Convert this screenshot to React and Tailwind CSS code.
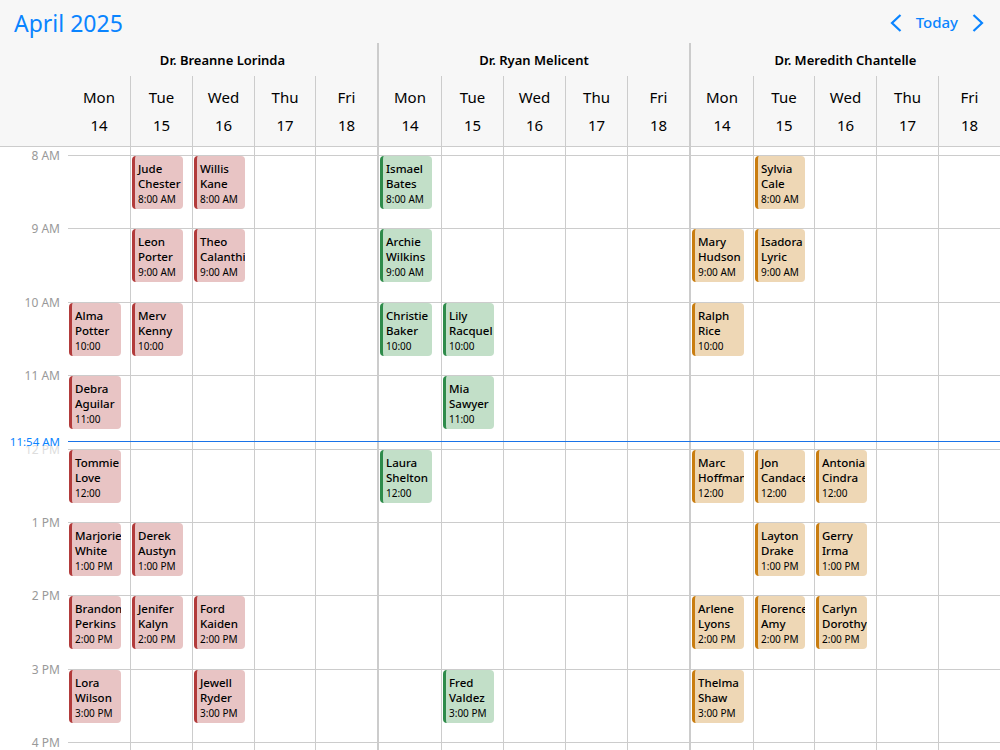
import React from 'react'

const days = [['Mon', 14], ['Tue', 15], ['Wed', 16], ['Thu', 17], ['Fri', 18]]
const doctors = ['Dr. Breanne Lorinda', 'Dr. Ryan Melicent', 'Dr. Meredith Chantelle']

// 15 day columns, col is 0-14, each doctor owns 5
const rows = [
    { label: '8 AM', time: '8:00 AM', events: { 1: ['Jude', 'Chester'], 2: ['Willis', 'Kane'], 5: ['Ismael', 'Bates'], 11: ['Sylvia', 'Cale'] } },
    { label: '9 AM', time: '9:00 AM', events: { 1: ['Leon', 'Porter'], 2: ['Theo', 'Calanthi'], 5: ['Archie', 'Wilkins'], 10: ['Mary', 'Hudson'], 11: ['Isadora', 'Lyric'] } },
    { label: '10 AM', time: '10:00', events: { 0: ['Alma', 'Potter'], 1: ['Merv', 'Kenny'], 5: ['Christie', 'Baker'], 6: ['Lily', 'Racquel'], 10: ['Ralph', 'Rice'] } },
    { label: '11 AM', time: '11:00', events: { 0: ['Debra', 'Aguilar'], 6: ['Mia', 'Sawyer'] } },
    { label: '12 PM', time: '12:00', faded: true, events: { 0: ['Tommie', 'Love'], 5: ['Laura', 'Shelton'], 10: ['Marc', 'Hoffman'], 11: ['Jon', 'Candace'], 12: ['Antonia', 'Cindra'] } },
    { label: '1 PM', time: '1:00 PM', events: { 0: ['Marjorie', 'White'], 1: ['Derek', 'Austyn'], 11: ['Layton', 'Drake'], 12: ['Gerry', 'Irma'] } },
    { label: '2 PM', time: '2:00 PM', events: { 0: ['Brandon', 'Perkins'], 1: ['Jenifer', 'Kalyn'], 2: ['Ford', 'Kaiden'], 10: ['Arlene', 'Lyons'], 11: ['Florence', 'Amy'], 12: ['Carlyn', 'Dorothy'] } },
    { label: '3 PM', time: '3:00 PM', events: { 0: ['Lora', 'Wilson'], 2: ['Jewell', 'Ryder'], 6: ['Fred', 'Valdez'], 10: ['Thelma', 'Shaw'] } },
    { label: '4 PM', time: '', events: {} },
]

const columns = Array.from({ length: 15 }, (_, i) => i)

// the column widths are not even in the picture, they round like a table
const tracks = 'grid-cols-[68px_62px_62px_62px_61px_62px_64px_62px_62px_62px_62px_64px_61px_62px_62px_62px]'

const cardWidth = { 0: 'w-[52px]', 5: 'w-[52px]', 10: 'w-[52px]', 11: 'w-[50px]' }

const cellBorder = (col) => {
    if (col === 0) return ''
    if (col % 5 === 0) return 'border-l-2 border-l-[#cccccc]'
    return 'border-l border-l-[#cccccc]'
}

const Chevron = ({ flip }) => (
    <svg width="12" height="18" viewBox="0 0 12 18" fill="none" className={flip ? 'rotate-180' : ''}>
        <polyline points="10.5,1 2,9 10.5,17" stroke="#0a84ff" strokeWidth="2.2" />
    </svg>
)

const EventCard = ({ col, name, time }) => {
    const tone = col < 5
        ? 'bg-[#e8c4c4] border-l-[#b23b3b]'
        : col < 10
            ? 'bg-[#c2dfc8] border-l-[#2e8b4a]'
            : 'bg-[#eed7b5] border-l-[#c97d10]'

    return (
        <div className={`ml-px h-[53px] overflow-hidden whitespace-nowrap rounded-[4px] border-l-[3px] pl-[3px] pt-[5px] text-black ${cardWidth[col] || 'w-[51px]'} ${tone}`}>
            <div className="text-[11.5px] leading-[15px] font-medium">{name[0]}</div>
            <div className="text-[11.5px] leading-[15px] font-medium">{name[1]}</div>
            <div className="mt-px text-[10px] leading-[14px]">{time}</div>
        </div>
    )
}

const App = () => {
    return (
        <div className="flex h-[750px] w-[1000px] flex-col overflow-hidden bg-white font-['Noto_Sans',sans-serif] text-black">
            <header className="border-b border-[#cccccc] bg-[#f7f7f7]">
                <div className="flex h-[43px] items-center justify-between pl-[14px] pr-[16px]">
                    <h1 className="mt-[4px] text-[23px] leading-none text-[#0a84ff]">April 2025</h1>
                    <div className="mt-[2px] flex items-center gap-[14px]">
                        <Chevron />
                        <span className="text-[15px] font-medium text-[#0a84ff]">Today</span>
                        <Chevron flip />
                    </div>
                </div>
                <div className={`grid ${tracks}`}>
                    <div />
                    {doctors.map((doctor, i) => (
                        <div key={doctor} className={`col-span-5 flex h-[33px] items-center justify-center pt-[2px] text-[13px] font-semibold ${i > 0 ? 'border-l-2 border-l-[#cccccc]' : ''}`}>
                            {doctor}
                        </div>
                    ))}
                    <div />
                    {columns.map((col) => (
                        <div key={col} className={`flex h-[70px] flex-col items-center pt-[7px] text-[15px] leading-[28px] ${cellBorder(col)}`}>
                            <span>{days[col % 5][0]}</span>
                            <span>{days[col % 5][1]}</span>
                        </div>
                    ))}
                </div>
            </header>

            <div className="relative flex-1 overflow-hidden">
                <div className={`grid h-2 ${tracks}`}>
                    <div />
                    {columns.map((col) => <div key={col} className={cellBorder(col)} />)}
                </div>
                {rows.map((row) => (
                    <div key={row.label} className={`grid h-[73.4px] ${tracks}`}>
                        <div className={`-mt-[7px] pr-[8px] text-right text-[12px] leading-[16px] ${row.faded ? 'text-[#dddddd]' : 'text-[#999999]'}`}>
                            {row.label}
                        </div>
                        {columns.map((col) => (
                            <div key={col} className={`border-t border-t-[#cccccc] ${cellBorder(col)}`}>
                                {row.events[col] && <EventCard col={col} name={row.events[col]} time={row.time} />}
                            </div>
                        ))}
                    </div>
                ))}

                {/* current time marker */}
                <div className="absolute left-0 right-0 top-[288px] flex h-[13px] items-center">
                    <span className="w-[68px] pr-[8px] text-right text-[11.5px] leading-none text-[#0a84ff]">11:54 AM</span>
                    <div className="h-px flex-1 bg-[#1a73e8]" />
                </div>
            </div>
        </div>
    )
}

export default App
